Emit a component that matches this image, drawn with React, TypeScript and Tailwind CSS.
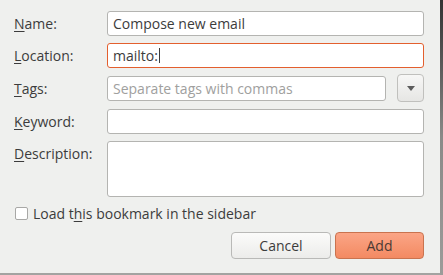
import React from 'react';

const Mn = ({ children }: { children: React.ReactNode }) => (
    <span className="underline decoration-1 underline-offset-2">{children}</span>
);

const Field = ({ className = '', children }: { className?: string; children?: React.ReactNode }) => (
    <div
        className={`h-[25px] bg-white rounded-[3px] border border-[#b4b4b1] flex items-center px-[5px] ${className}`}
    >
        {children}
    </div>
);

const App = () => {
    return (
        <div
            className="w-[443px] h-[275px] flex bg-[#a3a3a1] overflow-hidden text-[#3c3c3c] text-[14px]"
            style={{ fontFamily: '"Open Sans", "DejaVu Sans", sans-serif' }}
        >
            <div className="w-[440px] h-[273px] bg-[#eff0ee] flex flex-col pl-[14px] pr-[16px] pt-[11px]">
                <div className="grid grid-cols-[93px_317px] gap-y-[7px]">
                    <div className="h-[25px] flex items-center">
                        <span><Mn>N</Mn>ame:</span>
                    </div>
                    <Field>
                        <span>Compose new email</span>
                    </Field>

                    <div className="h-[25px] flex items-center">
                        <span><Mn>L</Mn>ocation:</span>
                    </div>
                    <Field className="border-[#e35f2e]">
                        <span>mailto:</span>
                        <span className="w-px h-[15px] bg-[#3c3c3c] ml-px" />
                    </Field>

                    <div className="h-[25px] flex items-center -mt-px translate-y-[2px]">
                        <span><Mn>T</Mn>ags:</span>
                    </div>
                    <div className="flex items-start -mt-px h-[28px]">
                        <Field className="w-[279px] mt-[2px]">
                            <span className="text-[#a0a09e]">Separate tags with commas</span>
                        </Field>
                        <div className="ml-[11px] w-[27px] h-[28px] rounded-[4px] border border-[#c0c0bd] bg-gradient-to-b from-[#f7f7f6] to-[#e6e6e4] flex items-center justify-center">
                            <svg width="8" height="5" viewBox="0 0 8 5">
                                <path d="M0 0 L8 0 L4 5 Z" fill="#5c5c5c" />
                            </svg>
                        </div>
                    </div>

                    <div className="h-[25px] flex items-center">
                        <span><Mn>K</Mn>eyword:</span>
                    </div>
                    <Field />

                    <div className="pt-[2px]">
                        <span><Mn>D</Mn>escription:</span>
                    </div>
                    <div className="h-[56px] bg-white rounded-[3px] border border-[#b4b4b1]" />
                </div>

                <div className="flex items-center mt-[10px] h-[13px]">
                    <div className="w-[13px] h-[13px] bg-white border border-[#a8a8a6] rounded-[2px] ml-px" />
                    <span className="ml-[5px]">
                        Load t<Mn>h</Mn>is bookmark in the sidebar
                    </span>
                </div>

                <div className="flex justify-end mt-[12px] gap-[4px]">
                    <button className="w-[100px] h-[27px] rounded-[4px] border border-[#b9b9b7] bg-gradient-to-b from-[#fbfbfa] to-[#ececea] text-[#3c3c3c]">
                        Cancel
                    </button>
                    <button className="w-[89px] h-[27px] rounded-[4px] border border-[#c9734f] bg-gradient-to-b from-[#fba586] to-[#f38a62] text-[#4a3a34]">
                        Add
                    </button>
                </div>
            </div>
            <div className="w-[3px] h-full bg-gradient-to-b from-[#333333] via-[#8a8a88] to-[#9c9c9a]" />
        </div>
    );
};

export default App;
